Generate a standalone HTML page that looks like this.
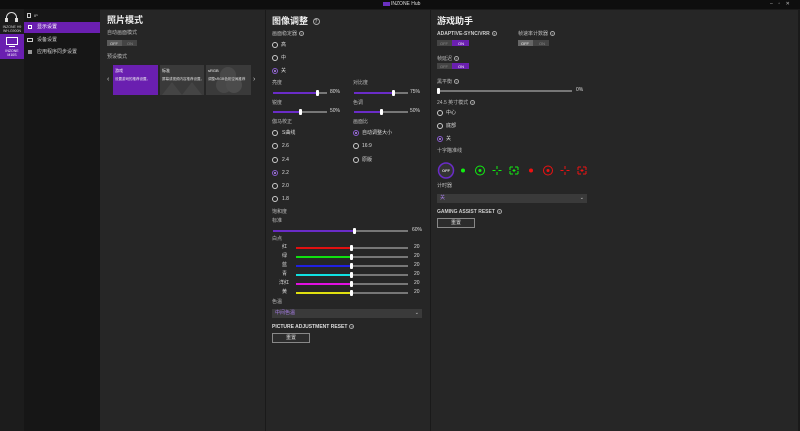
<!DOCTYPE html>
<html><head><meta charset="utf-8"><style>
*{margin:0;padding:0;box-sizing:border-box}
body{width:800px;height:431px;overflow:hidden;background:#1a1a1a;font-family:"Liberation Sans","Noto Sans CJK SC",sans-serif;color:#ddd;position:relative;font-size:5px}
.a{position:absolute;white-space:nowrap;line-height:1}
.t{font-size:9px;font-weight:bold;color:#eee}
.l{font-size:5px;color:#bbb}
.p{background:#262626;position:absolute;top:10px;height:421px}
.tr{position:absolute;height:2px;background:#777}
.tf{position:absolute;height:2px}
.th{position:absolute;width:3px;height:6px;background:#fff;border-radius:1px;margin-top:-2px}
.r{position:absolute;width:6px;height:6px;border:1px solid #ccc;border-radius:50%}
.r.c{border-color:#8a5cd0}
.r.c::after{content:"";position:absolute;left:1px;top:1px;width:2px;height:2px;border-radius:50%;background:#b58af0}
.tg{position:absolute;height:6px;width:31px;background:#444;font-size:4px;color:#888}
.tg span{position:absolute;top:1px}
.q{display:inline-block;width:5px;height:5px;border:0.8px solid #aaa;border-radius:50%;font-size:3px;text-align:center;line-height:4px;margin-left:2px;vertical-align:middle;color:#aaa}
.btn{position:absolute;width:38px;height:10px;border:1px solid #888;background:#2c2c2c;font-size:5px;text-align:center;line-height:8px;color:#ddd}
.dd{position:absolute;height:9px;background:#3a3a3a;font-size:5px;line-height:9px;padding-left:3px}
</style></head><body>
<div class="a" style="left:0;top:0;width:800px;height:9px;background:#0e0e0e"></div>
<div class="a" style="left:383px;top:2px;width:7px;height:4px;background:#6a30c0"></div>
<div class="a" style="left:391px;top:2px;font-size:5px;color:#ddd">INZONE Hub</div>
<div class="a" style="left:770px;top:2px;font-size:5px;color:#bbb">–&nbsp;&nbsp;&nbsp;&nbsp;▫&nbsp;&nbsp;&nbsp;&nbsp;✕</div>
<div class="a" style="left:0;top:9px;width:24px;height:422px;background:#1c1c1c"></div>
<div class="a" style="left:6px;top:12px;width:11px;height:9px;border:1.5px solid #ddd;border-bottom:none;border-radius:6px 6px 0 0"></div>
<div class="a" style="left:5px;top:18px;width:3px;height:4px;background:#ddd"></div>
<div class="a" style="left:15px;top:18px;width:3px;height:4px;background:#ddd"></div>
<div class="a" style="left:1px;top:25px;font-size:3.5px;color:#ccc;text-align:center;width:22px;line-height:4px;white-space:normal">INZONE H9<br>WH-G900N</div>
<div class="a" style="left:0;top:34px;width:24px;height:25px;background:#6a1fb0"></div>
<div class="a" style="left:6px;top:37px;width:12px;height:8px;border:1px solid #fff"></div>
<div class="a" style="left:9px;top:46px;width:6px;height:1px;background:#fff"></div>
<div class="a" style="left:1px;top:49px;font-size:3.5px;color:#fff;text-align:center;width:22px;line-height:4px">INZONE<br>M10S</div>
<div class="a" style="left:24px;top:9px;width:76px;height:422px;background:#161616"></div>
<div class="a" style="left:27px;top:13px;width:4px;height:5px;border:0.8px solid #ccc"></div>
<div class="a" style="left:34px;top:14px;font-size:4px;color:#ccc">IP</div>
<div class="a" style="left:24px;top:22px;width:76px;height:11px;background:#6a1fb0"></div>
<div class="a" style="left:28px;top:25px;width:4px;height:4px;border:0.8px solid #fff"></div>
<div class="a" style="left:37px;top:25px;font-size:5px;color:#fff">显示设置</div>
<div class="a" style="left:27px;top:38px;width:6px;height:4px;border:0.8px solid #ccc"></div>
<div class="a" style="left:37px;top:38px;font-size:5px;color:#ccc">设备设置</div>
<div class="a" style="left:28px;top:50px;width:4px;height:4px;background:#999"></div>
<div class="a" style="left:37px;top:50px;font-size:5px;color:#ccc">应用程序同步设置</div>
<div class="p" style="left:100px;width:165px"></div>
<div class="p" style="left:266px;width:164px"></div>
<div class="p" style="left:431px;width:367px"></div>

<div class="a t" style="left:107px;top:16px">照片模式</div>
<div class="a l" style="left:107px;top:31px">自动画面模式</div>
<div class="tg" style="left:107px;top:40px;width:30px"><div style="position:absolute;left:0;top:0;width:15px;height:6px;background:#5a5a5a"></div><span style="left:3px;color:#ddd">OFF</span><span style="left:20px">ON</span></div>
<div class="a l" style="left:107px;top:55px">预设模式</div>
<div class="a" style="left:107px;top:76px;font-size:7px;color:#ccc">‹</div>
<div class="a" style="left:253px;top:76px;font-size:7px;color:#ccc">›</div>
<div class="a" style="left:113px;top:65px;width:45px;height:30px;background:#6a1fb0"></div>
<div class="a" style="left:115px;top:69px;font-size:4px;color:#fff">游戏</div>
<div class="a" style="left:115px;top:78px;font-size:3.5px;color:#eee">设置游戏的推荐设置。</div>
<div class="a" style="left:160px;top:65px;width:44px;height:30px;background:#3a3a3a;overflow:hidden"><svg width="44" height="30"><path d="M2 30L12 17L22 30ZM22 30L32 17L42 30Z" fill="#444"/></svg></div>
<div class="a" style="left:162px;top:69px;font-size:4px;color:#eee">标准</div>
<div class="a" style="left:162px;top:78px;font-size:3.5px;color:#ddd">屏幕或视频内容推荐设置。</div>
<div class="a" style="left:206px;top:65px;width:45px;height:30px;background:#3a3a3a;overflow:hidden"><svg width="45" height="30"><circle cx="22" cy="10" r="8" fill="#484848"/><circle cx="18" cy="20" r="8" fill="#484848"/><circle cx="28" cy="20" r="8" fill="#4c4c4c"/></svg></div>
<div class="a" style="left:208px;top:69px;font-size:4px;color:#eee">sRGB</div>
<div class="a" style="left:208px;top:78px;font-size:3.5px;color:#ddd">调整sRGB色彩空间推荐</div>

<div class="a t" style="left:272px;top:17px">图像调整 <span class="q" style="width:7px;height:7px;line-height:6px;font-size:5px">?</span></div>
<div class="a l" style="left:272px;top:31px">画面稳定器<span class="q">?</span></div>
<div class="r" style="left:272px;top:42px"></div><div class="a l" style="left:281px;top:43px;color:#ddd">高</div>
<div class="r" style="left:272px;top:55px"></div><div class="a l" style="left:281px;top:56px;color:#ddd">中</div>
<div class="r c" style="left:272px;top:68px"></div><div class="a l" style="left:281px;top:69px;color:#ddd">关</div>
<div class="a l" style="left:272px;top:81px">亮度</div>
<div class="tr" style="left:273px;top:92px;width:54px"></div><div class="tf" style="left:273px;top:92px;width:44px;background:#6a2cc8"></div><div class="th" style="left:316px;top:92px"></div><div class="a l" style="left:330px;top:90px;color:#ddd">80%</div>
<div class="a l" style="left:353px;top:81px">对比度</div>
<div class="tr" style="left:354px;top:92px;width:54px"></div><div class="tf" style="left:354px;top:92px;width:39px;background:#6a2cc8"></div><div class="th" style="left:392px;top:92px"></div><div class="a l" style="left:410px;top:90px;color:#ddd">75%</div>
<div class="a l" style="left:272px;top:101px">锐度</div>
<div class="tr" style="left:273px;top:111px;width:54px"></div><div class="tf" style="left:273px;top:111px;width:27px;background:#6a2cc8"></div><div class="th" style="left:299px;top:111px"></div><div class="a l" style="left:330px;top:109px;color:#ddd">50%</div>
<div class="a l" style="left:353px;top:101px">色调</div>
<div class="tr" style="left:354px;top:111px;width:54px"></div><div class="tf" style="left:354px;top:111px;width:27px;background:#6a2cc8"></div><div class="th" style="left:380px;top:111px"></div><div class="a l" style="left:410px;top:109px;color:#ddd">50%</div>
<div class="a l" style="left:272px;top:120px">伽马校正</div>
<div class="r" style="left:272px;top:130px"></div><div class="a l" style="left:282px;top:131px;color:#ddd">S曲线</div>
<div class="r" style="left:272px;top:143px"></div><div class="a l" style="left:282px;top:144px;color:#ddd">2.6</div>
<div class="r" style="left:272px;top:157px"></div><div class="a l" style="left:282px;top:158px;color:#ddd">2.4</div>
<div class="r c" style="left:272px;top:170px"></div><div class="a l" style="left:282px;top:171px;color:#ddd">2.2</div>
<div class="r" style="left:272px;top:183px"></div><div class="a l" style="left:282px;top:184px;color:#ddd">2.0</div>
<div class="r" style="left:272px;top:196px"></div><div class="a l" style="left:282px;top:197px;color:#ddd">1.8</div>
<div class="a l" style="left:353px;top:120px">画面比</div>
<div class="r c" style="left:353px;top:130px"></div><div class="a l" style="left:362px;top:131px;color:#ddd">自动调整大小</div>
<div class="r" style="left:353px;top:143px"></div><div class="a l" style="left:362px;top:144px;color:#ddd">16:9</div>
<div class="r" style="left:353px;top:157px"></div><div class="a l" style="left:362px;top:158px;color:#ddd">原版</div>
<div class="a l" style="left:272px;top:210px">饱和度</div>
<div class="a l" style="left:272px;top:219px">标准</div>
<div class="tr" style="left:273px;top:230px;width:135px"></div><div class="tf" style="left:273px;top:230px;width:81px;background:#6a2cc8"></div><div class="th" style="left:353px;top:230px"></div><div class="a l" style="left:412px;top:228px;color:#ddd">60%</div>
<div class="a l" style="left:272px;top:237px">白点</div>
<div class="a l" style="left:282px;top:245px;color:#ddd">红</div><div class="tr" style="left:296px;top:247px;width:112px"></div><div class="tf" style="left:296px;top:247px;width:55px;background:#e01010"></div><div class="th" style="left:350px;top:247px"></div><div class="a l" style="left:414px;top:245px;color:#ddd">20</div>
<div class="a l" style="left:282px;top:254px;color:#ddd">绿</div><div class="tr" style="left:296px;top:256px;width:112px"></div><div class="tf" style="left:296px;top:256px;width:55px;background:#10e010"></div><div class="th" style="left:350px;top:256px"></div><div class="a l" style="left:414px;top:254px;color:#ddd">20</div>
<div class="a l" style="left:282px;top:263px;color:#ddd">蓝</div><div class="tr" style="left:296px;top:265px;width:112px"></div><div class="tf" style="left:296px;top:265px;width:55px;background:#2020e0"></div><div class="th" style="left:350px;top:265px"></div><div class="a l" style="left:414px;top:263px;color:#ddd">20</div>
<div class="a l" style="left:282px;top:272px;color:#ddd">青</div><div class="tr" style="left:296px;top:274px;width:112px"></div><div class="tf" style="left:296px;top:274px;width:55px;background:#10e0e0"></div><div class="th" style="left:350px;top:274px"></div><div class="a l" style="left:414px;top:272px;color:#ddd">20</div>
<div class="a l" style="left:279px;top:281px;color:#ddd">洋红</div><div class="tr" style="left:296px;top:283px;width:112px"></div><div class="tf" style="left:296px;top:283px;width:55px;background:#e010e0"></div><div class="th" style="left:350px;top:283px"></div><div class="a l" style="left:414px;top:281px;color:#ddd">20</div>
<div class="a l" style="left:282px;top:290px;color:#ddd">黄</div><div class="tr" style="left:296px;top:292px;width:112px"></div><div class="tf" style="left:296px;top:292px;width:55px;background:#e0e010"></div><div class="th" style="left:350px;top:292px"></div><div class="a l" style="left:414px;top:290px;color:#ddd">20</div>
<div class="a l" style="left:272px;top:300px">色温</div>
<div class="dd" style="left:272px;top:309px;width:150px;color:#a77ee8">中间色温<span style="position:absolute;right:3px;color:#ccc">⌄</span></div>
<div class="a" style="left:272px;top:324px;font-size:5px;font-weight:bold;color:#ddd">PICTURE ADJUSTMENT RESET<span class="q">?</span></div>
<div class="btn" style="left:272px;top:333px">重置</div>

<div class="a t" style="left:437px;top:17px">游戏助手</div>
<div class="a" style="left:437px;top:31px;font-size:5px;font-weight:bold;color:#ccc">ADAPTIVE-SYNC/VRR<span class="q">?</span></div>
<div class="a l" style="left:518px;top:31px">帧速率计数器<span class="q">?</span></div>
<div class="tg" style="left:437px;top:40px;width:32px"><div style="position:absolute;left:15px;top:0;width:17px;height:6px;background:#6a1fb0"></div><span style="left:3px">OFF</span><span style="left:21px;color:#fff">ON</span></div>
<div class="tg" style="left:518px;top:40px;width:31px"><div style="position:absolute;left:0;top:0;width:15px;height:6px;background:#666"></div><span style="left:3px;color:#eee">OFF</span><span style="left:21px">ON</span></div>
<div class="a l" style="left:437px;top:56px">帧延迟<span class="q">?</span></div>
<div class="tg" style="left:437px;top:63px;width:32px"><div style="position:absolute;left:15px;top:0;width:17px;height:6px;background:#6a1fb0"></div><span style="left:3px">OFF</span><span style="left:21px;color:#fff">ON</span></div>
<div class="a l" style="left:437px;top:79px">黑平衡<span class="q">?</span></div>
<div class="tr" style="left:438px;top:90px;width:134px"></div><div class="th" style="left:437px;top:90px"></div><div class="a l" style="left:576px;top:88px;color:#ddd">0%</div>
<div class="a l" style="left:437px;top:100px">24.5 英寸模式<span class="q">?</span></div>
<div class="r" style="left:437px;top:110px"></div><div class="a l" style="left:446px;top:111px;color:#ddd">中心</div>
<div class="r" style="left:437px;top:123px"></div><div class="a l" style="left:446px;top:124px;color:#ddd">底部</div>
<div class="r c" style="left:437px;top:136px"></div><div class="a l" style="left:446px;top:137px;color:#ddd">关</div>
<div class="a l" style="left:437px;top:149px">十字瞄准线</div>
<svg class="a" style="left:430px;top:155px" width="170" height="30" viewBox="0 0 170 30">
<circle cx="16" cy="15.5" r="7.5" fill="#333" stroke="#6a2cc8" stroke-width="1.5"/>
<text x="16" y="17" font-size="4" fill="#ddd" text-anchor="middle" font-family="Liberation Sans" font-weight="bold">OFF</text>
<circle cx="33" cy="15.5" r="2" fill="#1e1"/>
<circle cx="50" cy="15.5" r="4.5" fill="none" stroke="#1e1" stroke-width="1"/><circle cx="50" cy="15.5" r="1.5" fill="#1e1"/>
<path d="M67 11v3M67 17v3M62.5 15.5h3M68.5 15.5h3" stroke="#1e1" stroke-width="1"/>
<path d="M80 12h3M80 12v3M88 12h-3M88 12v3M80 19h3M80 19v-3M88 19h-3M88 19v-3M84 14v3M82.5 15.5h3" stroke="#1e1" stroke-width="1" fill="none"/>
<circle cx="101" cy="15.5" r="2" fill="#e11"/>
<circle cx="118" cy="15.5" r="4.5" fill="none" stroke="#e11" stroke-width="1"/><circle cx="118" cy="15.5" r="1.5" fill="#e11"/>
<path d="M135 11v3M135 17v3M130.5 15.5h3M136.5 15.5h3" stroke="#e11" stroke-width="1"/>
<path d="M148 12h3M148 12v3M156 12h-3M156 12v3M148 19h3M148 19v-3M156 19h-3M156 19v-3M152 14v3M150.5 15.5h3" stroke="#e11" stroke-width="1" fill="none"/>
</svg>
<div class="a l" style="left:437px;top:184px">计时器</div>
<div class="dd" style="left:437px;top:194px;width:150px;color:#a77ee8">关<span style="position:absolute;right:3px;color:#ccc">⌄</span></div>
<div class="a" style="left:437px;top:209px;font-size:5px;font-weight:bold;color:#ccc">GAMING ASSIST RESET<span class="q">?</span></div>
<div class="btn" style="left:437px;top:218px">重置</div>
</body></html>
